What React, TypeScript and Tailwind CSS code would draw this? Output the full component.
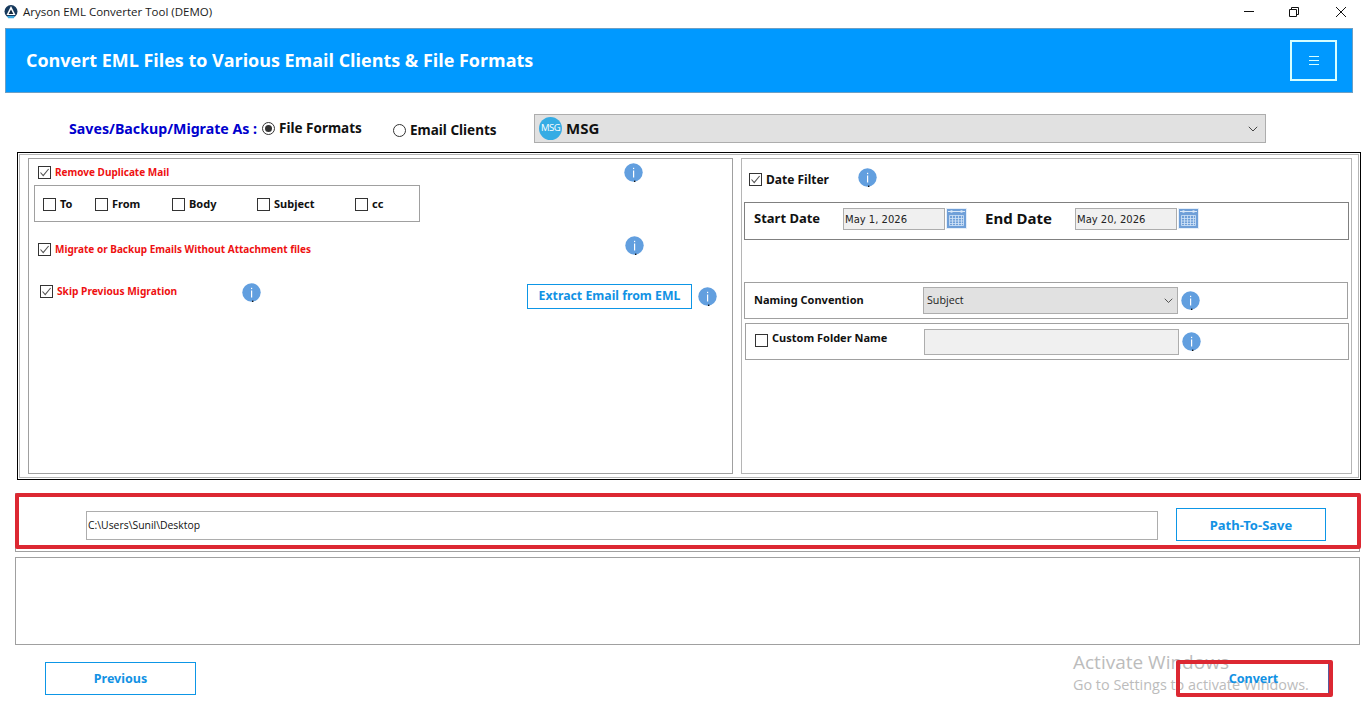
import React from "react";

const tahoma = "font-['Noto_Sans',sans-serif] font-bold";

function InfoIcon({ className = "" }: { className?: string }) {
  return (
    <svg width="19" height="19" viewBox="0 0 19 19" className={`shrink-0 ${className}`}>
      <circle cx="9.5" cy="9.5" r="9.2" fill="#629fdf" />
      <rect x="9" y="7.5" width="1.2" height="7" fill="#fff" />
      <rect x="9" y="4.8" width="1.2" height="1.3" fill="#fff" />
      <rect x="10" y="17.6" width="1.4" height="1.4" fill="#111" />
    </svg>
  );
}

function CalendarIcon() {
  return (
    <svg width="21" height="21" viewBox="0 0 21 21" className="shrink-0">
      <rect width="21" height="21" fill="#e4eef9" />
      <rect x="1" y="1" width="19" height="19" fill="#6f9fd8" />
      <rect x="2" y="3" width="17" height="1" fill="#dbe9f8" />
      <circle cx="5.5" cy="3.5" r="1.3" fill="#dbe9f8" />
      <circle cx="15.5" cy="3.5" r="1.3" fill="#dbe9f8" />
      <path
        d="M3.5 7.5h14v10h-14zM3.5 10.5h14M3.5 13h14M3.5 15.5h14M6.5 7.5v10M9.5 7.5v10M12.5 7.5v10M15.5 7.5v10"
        fill="none"
        stroke="#d3e4f7"
        strokeWidth="0.8"
      />
    </svg>
  );
}

function CheckBox({ checked = false, className = "" }: { checked?: boolean; className?: string }) {
  return (
    <span className={`flex h-[13px] w-[13px] shrink-0 items-center justify-center border border-[#333] bg-white ${className}`}>
      {checked ? (
        <svg width="11" height="11" viewBox="0 0 11 11">
          <path d="M1.5 5.5 4.2 8.6 9.6 2" fill="none" stroke="#555" strokeWidth="1.1" />
        </svg>
      ) : null}
    </span>
  );
}

function Chevron({ size = 10 }: { size?: number }) {
  return (
    <svg width={size} height={size * 0.6} viewBox="0 0 10 6" className="shrink-0">
      <path d="M.8.8 5 5 9.2.8" fill="none" stroke="#444" strokeWidth="1" />
    </svg>
  );
}

function Radio({ checked = false }: { checked?: boolean }) {
  return (
    <span className="flex h-[13px] w-[13px] shrink-0 items-center justify-center rounded-full border border-[#333] bg-white">
      {checked ? <span className="h-[7px] w-[7px] rounded-full bg-[#333]" /> : null}
    </span>
  );
}

function DupOption({ label, width }: { label: string; width: string }) {
  return (
    <div className={`flex items-center gap-[4px] ${width}`}>
      <CheckBox />
      <span className={`${tahoma} text-[11px] text-[#111]`}>{label}</span>
    </div>
  );
}

function DateInput({ value }: { value: string }) {
  return (
    <div className="flex h-[22px] w-[102px] items-center border border-[#adadad] bg-[#f0f0f0] pl-[1px] font-['DejaVu_Sans',sans-serif] text-[10px] text-[#222]">
      {value}
    </div>
  );
}

function OutlineButton({ label, className }: { label: string; className: string }) {
  return (
    <button
      className={`${tahoma} flex items-center justify-center border border-[#0d96e6] bg-white text-[#1292e4] ${className}`}
    >
      {label}
    </button>
  );
}

export default function App() {
  return (
    <div className="relative h-[728px] w-[1366px] overflow-hidden bg-white font-['Open_Sans',sans-serif]">
      {/* Window title bar */}
      <div className="flex h-[28px] items-center">
        <svg width="14" height="15" viewBox="0 0 14 15" className="ml-[4px] mb-[6px] shrink-0">
          <circle cx="7" cy="7.5" r="6.5" fill="#16395c" />
          <path d="M7 2 11.5 11h-9z" fill="#fff" />
          <path d="M7 5.5 9.4 10H4.6z" fill="#13293f" />
          <path d="M3 12h8l-1.2 2.2H4.2z" fill="#3fa7dd" />
        </svg>
        <span className="ml-[5px] mb-[5px] text-[11.5px] text-[#1a1a1a]">Aryson EML Converter Tool (DEMO)</span>
        <div className="ml-auto mb-[5px] flex items-center">
          <svg width="12" height="12" viewBox="0 0 12 12" className="mr-[33px]">
            <path d="M1 5.5h10" stroke="#111" strokeWidth="1" />
          </svg>
          <svg width="12" height="12" viewBox="0 0 12 12" className="mr-[35px]">
            <path d="M1.5 3.5h7v7h-7zM3.5 3.5v-2h7v7h-2" fill="none" stroke="#111" strokeWidth="1" />
          </svg>
          <svg width="12" height="12" viewBox="0 0 12 12" className="mr-[19px]">
            <path d="M1 1l10 10M11 1 1 11" stroke="#111" strokeWidth="1" />
          </svg>
        </div>
      </div>

      {/* Banner */}
      <div className="ml-[5px] flex h-[65px] w-[1348px] items-center justify-between border border-[#6d9fc4] bg-[#0099ff] pl-[20px] pr-[15px]">
        <h1 className="text-[17.95px] font-bold text-white">Convert EML Files to Various Email Clients &amp; File Formats</h1>
        <div className="flex h-[41px] w-[47px] flex-col items-center justify-center gap-[3px] border-2 border-[#d5ffff]">
          <span className="h-px w-[10px] bg-[#d5ffff]" />
          <span className="h-px w-[10px] bg-[#d5ffff]" />
          <span className="h-px w-[10px] bg-[#d5ffff]" />
        </div>
      </div>

      {/* Save-as selector */}
      <div className="flex h-[59px] items-start pt-[21px]">
        <span className={`${tahoma} ml-[69px] mt-[4px] w-[193px] whitespace-nowrap text-[14.2px] text-[#0000cd]`}>
          Saves/Backup/Migrate As :
        </span>
        <div className="mt-[8px]">
          <Radio checked />
        </div>
        <span className={`${tahoma} ml-[4px] mt-[4px] w-[114px] text-[13.5px] text-[#111]`}>File Formats</span>
        <div className="mt-[10px]">
          <Radio />
        </div>
        <span className={`${tahoma} ml-[4px] mt-[6px] w-[124px] text-[13.5px] text-[#111]`}>Email Clients</span>
        <div className="flex h-[29px] w-[732px] items-center border border-[#adadad] bg-[#e1e1e1] pl-[4px] pr-[7px]">
          <span className="flex h-[23px] w-[23px] shrink-0 items-center justify-center rounded-full bg-[#35ace4] font-['Open_Sans',sans-serif] text-[9.5px] tracking-[-0.5px] text-white">
            MSG
          </span>
          <span className={`${tahoma} ml-[4px] text-[15px] text-[#111]`}>MSG</span>
          <span className="ml-auto">
            <Chevron />
          </span>
        </div>
      </div>

      {/* Options frame */}
      <div className="ml-[17px] h-[328px] w-[1344px] border-[1.5px] border-black p-px">
        <div className="flex h-full w-full gap-[8px] border border-[#b5b5b5] pl-[8px] pt-[3px]">
          {/* Left panel */}
          <div className="flex h-[316px] w-[705px] flex-col border border-[#a0a0a0] pl-[9px]">
            <div className="mt-[3px] flex h-[20px] items-center">
              <div className="flex w-[586px] items-center gap-[4px]">
                <CheckBox checked />
                <span className={`${tahoma} text-[10px] text-[#ee1111]`}>Remove Duplicate Mail</span>
              </div>
              <InfoIcon />
            </div>
            <div className="-ml-[4px] mt-[3px] flex h-[37px] w-[386px] items-center border border-[#a0a0a0] pl-[8px] pt-px">
              <DupOption label="To" width="w-[52px]" />
              <DupOption label="From" width="w-[77px]" />
              <DupOption label="Body" width="w-[85px]" />
              <DupOption label="Subject" width="w-[98px]" />
              <DupOption label="cc" width="w-[50px]" />
            </div>
            <div className="mt-[14px] flex items-start">
              <div className="mt-[7px] flex h-[13px] w-[587px] items-center gap-[4px]">
                <CheckBox checked />
                <span className={`${tahoma} text-[10px] text-[#ee1111]`}>
                  Migrate or Backup Emails Without Attachment files
                </span>
              </div>
              <InfoIcon />
            </div>
            <div className="mt-[28px] flex items-start pl-[2px]">
              <div className="mt-px flex h-[13px] w-[202px] items-center gap-[4px]">
                <CheckBox checked />
                <span className={`${tahoma} text-[10.2px] text-[#ee1111]`}>Skip Previous Migration</span>
              </div>
              <InfoIcon className="-mt-px" />
              <OutlineButton label="Extract Email from EML" className="ml-[266px] h-[25px] w-[165px] text-[12.3px]" />
              <InfoIcon className="ml-[6px] mt-[3px]" />
            </div>
          </div>

          {/* Right panel */}
          <div className="flex h-[316px] w-[611px] flex-col border border-[#b5b5b5] pl-[2px]">
            <div className="mt-[9px] flex items-start pl-[5px]">
              <div className="mt-[5px] flex h-[13px] w-[109px] items-center gap-[4px]">
                <CheckBox checked />
                <span className={`${tahoma} text-[12px] text-[#111]`}>Date Filter</span>
              </div>
              <InfoIcon />
            </div>
            <div className="mt-[15px] flex h-[38px] w-[605px] items-start border border-[#808080] pl-[9px] pt-[5px]">
              <span className={`${tahoma} h-[20px] w-[89px] text-[13px] leading-[20px] text-[#111]`}>Start Date</span>
              <DateInput value="May 1, 2026" />
              <span className="ml-px">
                <CalendarIcon />
              </span>
              <span className={`${tahoma} ml-[18px] h-[20px] w-[90px] text-[15px] leading-[20px] text-[#111]`}>End Date</span>
              <DateInput value="May 20, 2026" />
              <span className="ml-px">
                <CalendarIcon />
              </span>
            </div>
            <div className="mt-[42px] flex h-[37px] w-[604px] items-center border border-[#a0a0a0] pl-[9px]">
              <span className={`${tahoma} w-[169px] text-[11px] text-[#111]`}>Naming Convention</span>
              <div className="flex h-[27px] w-[255px] items-center justify-between border border-[#adadad] bg-[#e1e1e1] pl-[3px] pr-[4px] text-[10.7px] text-[#222]">
                Subject
                <Chevron size={9} />
              </div>
              <InfoIcon className="ml-[3px]" />
            </div>
            <div className="ml-px mt-[4px] flex h-[37px] w-[604px] items-center border border-[#a0a0a0] pl-[9px]">
              <CheckBox className="mb-[3px]" />
              <span className={`${tahoma} mb-[7px] ml-[4px] w-[152px] text-[11px] text-[#111]`}>Custom Folder Name</span>
              <div className="h-[26px] w-[255px] border border-[#adadad] bg-[#f0f0f0]" />
              <InfoIcon className="ml-[3px]" />
            </div>
          </div>
        </div>
      </div>

      {/* Path row */}
      <div className="relative ml-[15px] mt-[13px] flex h-[59px] w-[1345px] items-start border border-[#a0a0a0] pl-[70px] pt-[14px]">
        <div className="mt-[3px] flex h-[29px] w-[1072px] items-center border border-[#adadad] bg-white pl-[1px] text-[10.4px] text-[#111]">
          C:\Users\Sunil\Desktop
        </div>
        <OutlineButton label="Path-To-Save" className="ml-[18px] h-[33px] w-[150px] pt-[2px] text-[13px]" />
        <div className="absolute -left-px -top-px h-[56px] w-[1346px] rounded-[2px] border-4 border-[#dc2832]" />
      </div>

      {/* Log box */}
      <div className="ml-[15px] mt-[5px] h-[88px] w-[1345px] border border-[#a0a0a0]" />

      {/* Footer buttons */}
      <div className="mt-[15px] flex items-start">
        <OutlineButton label="Previous" className="ml-[45px] mt-[2px] h-[33px] w-[151px] pt-[2px] text-[12.5px]" />
        <button
          className={`${tahoma} relative z-10 ml-[980px] flex h-[37px] w-[157px] items-center justify-center rounded-[2px] border-4 border-[#dc2832] pr-[2px] pt-[2px] text-[12.5px] text-[#1292e4] shadow-[inset_-1px_0_0_#5a5a9a]`}
        >
          Convert
        </button>
      </div>

      {/* Activation watermark */}
      <div className="absolute left-[1073px] top-[649px] font-['Open_Sans',sans-serif] text-[#bcbcbc]">
        <p className="text-[19px] leading-[26px]">Activate Windows</p>
        <p className="text-[14.4px] leading-[20px]">Go to Settings to activate Windows.</p>
      </div>
    </div>
  );
}
